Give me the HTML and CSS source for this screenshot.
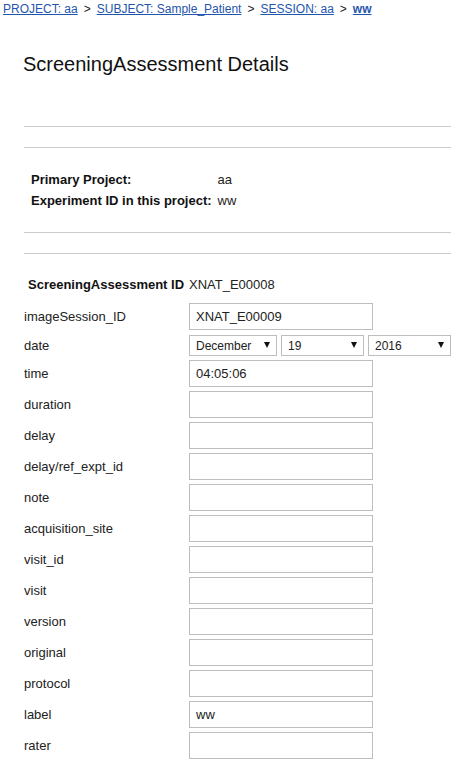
FILE: index.html
```html
<!DOCTYPE html>
<html>
<head>
<meta charset="utf-8">
<title>ScreeningAssessment Details</title>
<link rel="stylesheet" href="styles.css">
</head>
<body>
<div class="crumbs">
  <a href="#">PROJECT: aa</a><span class="sep">&gt;</span><a href="#">SUBJECT: Sample_Patient</a><span class="sep">&gt;</span><a href="#">SESSION: aa</a><span class="sep">&gt;</span><a href="#" class="current">ww</a>
</div>

<h1 class="title">ScreeningAssessment Details</h1>

<div class="page">
  <div class="rule rule-first"></div>
  <div class="rule rule-second"></div>

  <div class="info">
    <div class="info-label">Primary Project:</div><div class="info-value">aa</div>
    <div class="info-label">Experiment ID in this project:</div><div class="info-value">ww</div>
  </div>

  <div class="rule rule-first"></div>
  <div class="rule rule-second"></div>

  <div class="id-row">
    <span class="id-label">ScreeningAssessment ID</span><span class="id-value">XNAT_E00008</span>
  </div>

  <div class="form">
    <label class="lbl">imageSession_ID</label><input class="field" type="text" value="XNAT_E00009">
    <label class="lbl">date</label>
    <div class="date">
      <span class="sel sel-month"><select><option>December</option></select></span>
      <span class="sel sel-day"><select><option>19</option></select></span>
      <span class="sel sel-year"><select><option>2016</option></select></span>
    </div>
    <label class="lbl">time</label><input class="field" type="text" value="04:05:06">
    <label class="lbl">duration</label><input class="field" type="text">
    <label class="lbl">delay</label><input class="field" type="text">
    <label class="lbl">delay/ref_expt_id</label><input class="field" type="text">
    <label class="lbl">note</label><input class="field" type="text">
    <label class="lbl">acquisition_site</label><input class="field" type="text">
    <label class="lbl">visit_id</label><input class="field" type="text">
    <label class="lbl">visit</label><input class="field" type="text">
    <label class="lbl">version</label><input class="field" type="text">
    <label class="lbl">original</label><input class="field" type="text">
    <label class="lbl">protocol</label><input class="field" type="text">
    <label class="lbl">label</label><input class="field" type="text" value="ww">
    <label class="lbl">rater</label><input class="field" type="text">
  </div>
</div>
</body>
</html>
```

FILE: styles.css
```css
html, body {
  margin: 0;
  padding: 0;
  background: #fff;
}

body {
  font-family: "Liberation Sans", Arial, sans-serif;
  color: #222;
  width: 475px;
  overflow: hidden;
}

.crumbs {
  padding: 3px 0 0 3px;
  font-size: 12px;
  line-height: 13px;
  height: 13px;
  white-space: nowrap;
}

.crumbs a {
  color: #1f55ad;
  text-decoration: underline;
}

.crumbs a.current {
  font-weight: bold;
}

.crumbs .sep {
  color: #222;
  margin: 0 6px;
}

.title {
  margin: 37px 0 0 23px;
  font-size: 20px;
  line-height: 23px;
  font-weight: normal;
  color: #111;
}

.page {
  margin-left: 24px;
  width: 427px;
}

.rule {
  height: 0;
  border-top: 1px solid #cbcbcb;
}

.rule-first {
  margin-top: 50px;
}

.page .info + .rule-first {
  margin-top: 21px;
}

.rule-second {
  margin-top: 20px;
}

.info {
  margin-top: 21px;
  padding-left: 7px;
  display: grid;
  grid-template-columns: auto 1fr;
  column-gap: 6px;
  font-size: 13px;
  line-height: 21px;
}

.info-label {
  font-weight: bold;
  color: #111;
}

.info-value {
  color: #222;
}

.id-row {
  margin-top: 20px;
  padding-left: 4px;
  display: flex;
  font-size: 13px;
  line-height: 21px;
}

.id-label {
  font-weight: bold;
  color: #111;
  width: 161px;
  white-space: nowrap;
}

.id-value {
  color: #222;
}

.form {
  margin-top: 8px;
  display: grid;
  grid-template-columns: 165px 184px;
  row-gap: 4px;
  align-items: center;
}

.lbl {
  font-size: 13px;
  color: #222;
  white-space: nowrap;
}

.field {
  box-sizing: border-box;
  width: 184px;
  height: 27px;
  margin: 0;
  border: 1px solid #bdbdbd;
  padding: 0 6px;
  font-family: "Liberation Sans", Arial, sans-serif;
  font-size: 13px;
  color: #222;
  background: #fff;
  outline: none;
}

.date {
  display: flex;
  gap: 4px;
  width: 262px;
  height: 22px;
  align-items: flex-end;
}

.sel {
  position: relative;
  display: block;
  height: 21px;
}

.sel-month { width: 88px; }
.sel-day { width: 83px; }
.sel-year { width: 83px; }

.sel select {
  -webkit-appearance: none;
  appearance: none;
  box-sizing: border-box;
  width: 100%;
  height: 21px;
  margin: 0;
  border: 1px solid #bdbdbd;
  border-radius: 0;
  background: #fff;
  padding: 0 0 0 6px;
  font-family: "Liberation Sans", Arial, sans-serif;
  font-size: 12px;
  color: #222;
  outline: none;
}

.sel::after {
  content: "";
  position: absolute;
  right: 7px;
  top: 7px;
  width: 0;
  height: 0;
  border-left: 3px solid transparent;
  border-right: 3px solid transparent;
  border-top: 6px solid #111;
  pointer-events: none;
}
```
